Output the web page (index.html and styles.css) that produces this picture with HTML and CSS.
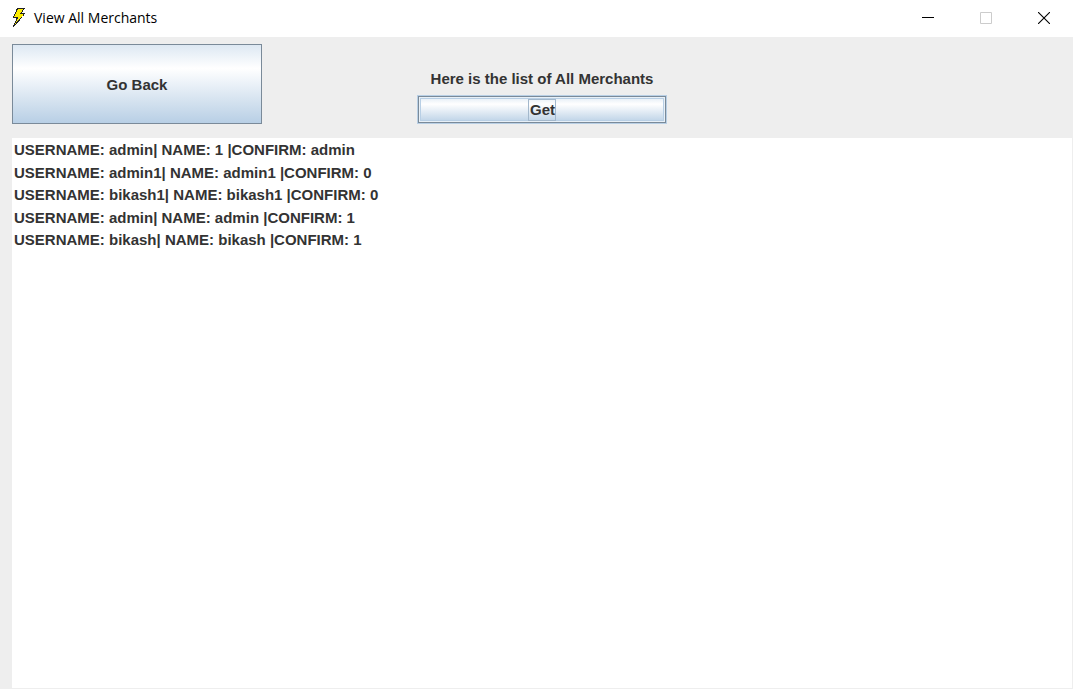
FILE: index.html
```html
<!DOCTYPE html>
<html lang="en">
<head>
<meta charset="utf-8">
<title>View All Merchants</title>
<link rel="stylesheet" href="styles.css">
</head>
<body>
<div class="window">
  <header class="titlebar">
    <svg class="bolt" width="14" height="20" viewBox="0 0 14 20" aria-hidden="true">
      <path d="M5.5 .5H12L9 5.5h3.5L10.500 8.500 1.500 18.500 5 10.500 5.500 9H1.500L3.500 5z" fill="#ffee00" stroke="#222" stroke-width="1" shape-rendering="crispEdges"/>
    </svg>
    <h1 class="title">View All Merchants</h1>
    <button class="control" type="button" aria-label="Minimize">
      <svg width="12" height="12" viewBox="0 0 12 12"><path d="M0 5.5h12" stroke="#000"/></svg>
    </button>
    <button class="control" type="button" aria-label="Maximize" disabled>
      <svg width="12" height="12" viewBox="0 0 12 12"><path d="M.5.5h11v11H.5z" fill="none" stroke="#ccc"/></svg>
    </button>
    <button class="control" type="button" aria-label="Close">
      <svg width="12" height="12" viewBox="0 0 12 12"><path d="M0 0l12 12M12 0L0 12" stroke="#000" stroke-width="1.1"/></svg>
    </button>
  </header>
  <main class="content">
    <div class="toolbar">
      <button class="button back" type="button">Go Back</button>
      <div class="fetch">
        <p class="caption">Here is the list of All Merchants</p>
        <button class="button get" type="button"><span class="focus">Get</span></button>
      </div>
    </div>
    <ul class="list">
      <li>USERNAME: admin| NAME: 1 |CONFIRM: admin</li>
      <li>USERNAME: admin1| NAME: admin1 |CONFIRM: 0</li>
      <li>USERNAME: bikash1| NAME: bikash1 |CONFIRM: 0</li>
      <li>USERNAME: admin| NAME: admin |CONFIRM: 1</li>
      <li>USERNAME: bikash| NAME: bikash |CONFIRM: 1</li>
    </ul>
  </main>
</div>
</body>
</html>
```
FILE: styles.css
```css
* {
  box-sizing: border-box;
}

body {
  margin: 0;
  background: #fff;
  color: #333;
  font: bold 15px/1.5 "Liberation Sans", Arial, sans-serif;
}

.window {
  display: flex;
  flex-direction: column;
  min-height: 100vh;
  padding: 0 1px 1px 0;
}

.titlebar {
  display: flex;
  align-items: center;
  height: 37px;
  padding: 0 0 1px 12px;
}

.bolt {
  flex: none;
}

.title {
  flex: 1;
  margin: 0 0 0 8px;
  color: #000;
  font: 14px/20px "Segoe UI", "Open Sans", sans-serif;
}

.control {
  display: flex;
  align-items: center;
  justify-content: center;
  width: 58px;
  height: 36px;
  padding: 0;
  border: 0;
  background: none;
}

.content {
  flex: 1;
  display: flex;
  flex-direction: column;
  padding: 7px 1px 1px 12px;
  background: #eee;
}

.toolbar {
  display: flex;
  align-items: flex-end;
  gap: 155px;
  padding-bottom: 14px;
}

.button {
  width: 250px;
  padding: 0;
  border: 1px solid #7a8a99;
  border-radius: 0;
  background: linear-gradient(#dde8f3, #fff 30%, #b8cfe5);
  color: #333;
  font: inherit;
}

.back {
  height: 80px;
  padding-top: 2px;
}

.fetch {
  display: flex;
  flex-direction: column;
  gap: 5px;
}

.caption {
  margin: 0;
  line-height: 22px;
  text-align: center;
}

.get {
  display: flex;
  align-items: center;
  justify-content: center;
  height: 29px;
  border: 1px solid #b8cfe5;
  box-shadow: inset 0 0 0 1px #7a8a99, inset 0 0 0 2px #e8f0f7, inset 0 0 0 3px #b8cfe5;
}

.focus {
  padding: 0 0 0 1px;
  border: 1px solid #a3b8cc;
  line-height: 20px;
}

.list {
  flex: 1;
  margin: 0;
  padding: 1px 2px;
  background: #fff;
  list-style: none;
}
```
